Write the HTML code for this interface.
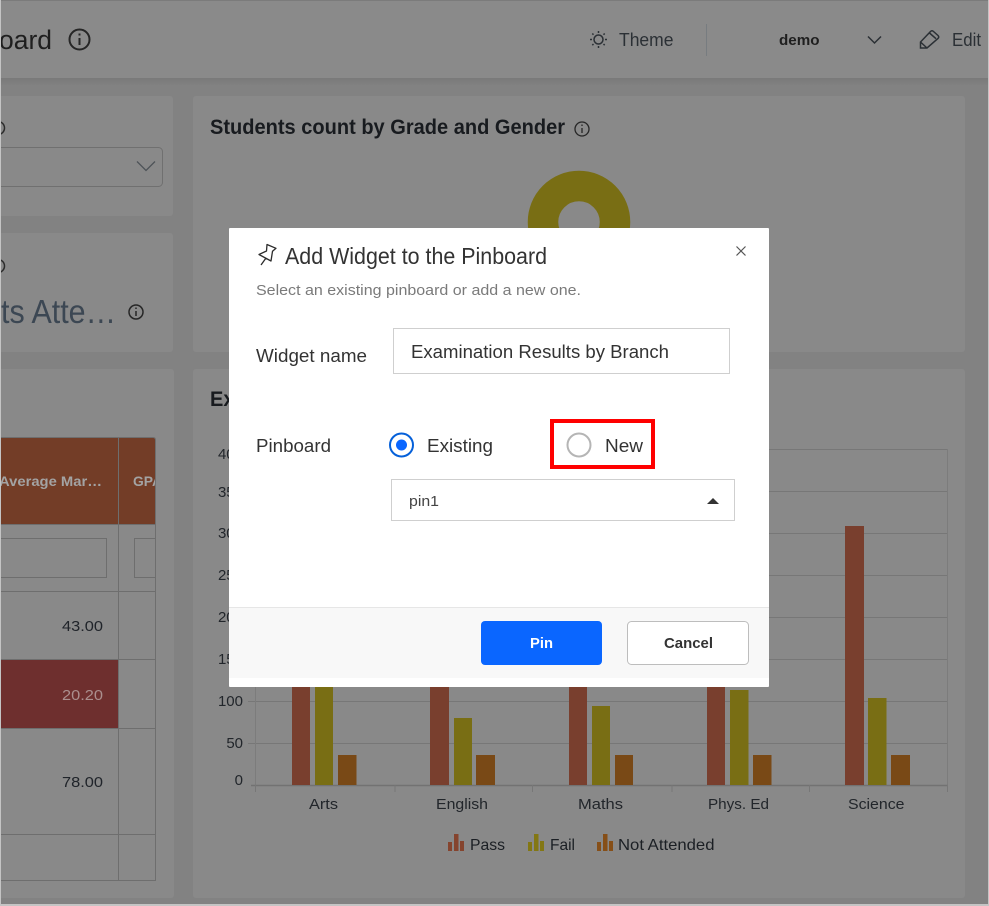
<!DOCTYPE html>
<html><head><meta charset="utf-8"><title>Add Widget to the Pinboard</title>
<style>
html,body{margin:0;padding:0;width:989px;height:906px;overflow:hidden;background:#828282}
svg{display:block}
text{font-family:"Liberation Sans",sans-serif;white-space:pre}
.b{font-weight:bold}
</style></head><body>
<svg width="989" height="906" viewBox="0 0 989 906" xmlns="http://www.w3.org/2000/svg">
<defs>
<clipPath id="gpa"><rect x="119" y="438" width="36" height="86"/></clipPath>
<linearGradient id="hs" x1="0" y1="0" x2="0" y2="1"><stop offset="0" stop-color="#797979"/><stop offset="1" stop-color="#828282"/></linearGradient>
</defs>
<rect width="989" height="906" fill="#828282"/>
<!-- header -->
<rect x="0" y="1" width="989" height="77" fill="#8a8a8a"/>
<rect x="0" y="78" width="989" height="8" fill="url(#hs)"/>
<rect x="0" y="0" width="989" height="1" fill="#7b7b7b"/>
<text x="-1" y="49" font-size="27" fill="#1f1f1f" textLength="53" lengthAdjust="spacingAndGlyphs">oard</text>
<g fill="none" stroke="#262626" stroke-width="2"><circle cx="79.5" cy="39.5" r="10"/><path d="M79.5 38v7M79.5 33.5v2"/></g>
<g fill="none" stroke="#2b3035" stroke-width="1.5"><circle cx="598.5" cy="39.5" r="4.5"/><path d="M598.500 31v2M598.500 46v2M590 39.500h2M605 39.500h2M592.300 33.500l1.200 1.200M603.500 44l1.200 1.200M604.700 33.500l-1.200 1.200M593.500 44l-1.200 1.200"/></g>
<text x="619" y="46" font-size="18" fill="#2b3035" textLength="54.500" lengthAdjust="spacingAndGlyphs">Theme</text>
<rect x="706" y="24" width="1" height="32" fill="#777c80"/>
<text class="b" x="779" y="45" font-size="14.500" fill="#1f1f1f" textLength="40.500" lengthAdjust="spacingAndGlyphs">demo</text>
<path d="M868 36.500l6.500 6.500 6.500-6.500" fill="none" stroke="#2b3035" stroke-width="1.500"/>
<path d="M920.500 48v-6l10-10.500q1.500-1.500 3 0l4.500 4q1.500 1.500 0 3l-11 9.500zM929.500 33l6.500 5.700M920.500 42l6.500 6" fill="none" stroke="#2b3035" stroke-width="1.500"/>
<text x="952" y="46" font-size="18" fill="#2b3035" textLength="29" lengthAdjust="spacingAndGlyphs">Edit</text>
<!-- left cards -->
<rect x="-10" y="96" width="183" height="120" rx="3" fill="#898989"/>
<circle cx="-2" cy="128" r="6.500" fill="none" stroke="#2b2b2b" stroke-width="1.500"/>
<rect x="-10" y="147.500" width="172.500" height="39" rx="4" fill="none" stroke="#707070"/>
<path d="M137 161.500l9 9 9-9" fill="none" stroke="#4e5358" stroke-width="1.300"/>
<rect x="-10" y="233" width="183" height="119" rx="3" fill="#898989"/>
<circle cx="-2" cy="266" r="6.500" fill="none" stroke="#2b2b2b" stroke-width="1.500"/>
<text x="1" y="323" font-size="33" fill="#3c4753" textLength="115" lengthAdjust="spacingAndGlyphs">ts Atte…</text>
<g fill="none" stroke="#262626" stroke-width="1.500"><circle cx="136" cy="312" r="7"/><path d="M136 311v5M136 307.500v1.500"/></g>
<rect x="-10" y="369" width="184" height="529" rx="3" fill="#898989"/>
<!-- table -->
<rect x="0" y="438" width="155" height="86" fill="#733d27"/>
<rect x="0" y="660" width="118" height="68" fill="#6e2f2e"/>
<g stroke="#6e6e6e" fill="none">
<path d="M0 437.500h153q2.500 0 2.500 2.500v440.500H0"/>
<path d="M118.500 438v443M0 524.500h155M0 591.500h155M0 659.500h155M0 728.500h155M0 834.500h155"/>
<path d="M0 538.500h106.500v39H0M155 538.500h-20.500v39H155"/>
</g>
<text class="b" x="-1" y="486" font-size="14" fill="#a3a3a3" textLength="103" lengthAdjust="spacingAndGlyphs">Average Mar…</text>
<g clip-path="url(#gpa)"><text class="b" x="133" y="486" font-size="14" fill="#a3a3a3" textLength="29" lengthAdjust="spacingAndGlyphs">GPA</text></g>
<text x="62" y="631" font-size="15" fill="#20242a" textLength="41" lengthAdjust="spacingAndGlyphs">43.00</text>
<text x="62" y="700" font-size="15" fill="#ab8f8e" textLength="41" lengthAdjust="spacingAndGlyphs">20.20</text>
<text x="62" y="787" font-size="15" fill="#20242a" textLength="41" lengthAdjust="spacingAndGlyphs">78.00</text>
<!-- right cards -->
<rect x="193" y="96" width="772" height="256" rx="3" fill="#898989"/>
<text class="b" x="210" y="134" font-size="21" fill="#181b1f" textLength="355" lengthAdjust="spacingAndGlyphs">Students count by Grade and Gender</text>
<g fill="none" stroke="#262626" stroke-width="1.300"><circle cx="582" cy="129" r="7"/><path d="M582 128v5M582 124.500v1.500"/></g>
<circle cx="579" cy="222" r="36" fill="none" stroke="#796e14" stroke-width="30.500"/>
<rect x="193" y="369" width="772" height="529" rx="3" fill="#898989"/>
<text class="b" x="210" y="406" font-size="21" fill="#181b1f" textLength="300" lengthAdjust="spacingAndGlyphs">Examination Results by Branch</text>
<!-- chart grid -->
<g stroke="#777777" fill="none">
<path d="M248 449.500h700M248 491.500h700M248 533.500h700M248 575.500h700M248 617.500h700M248 659.500h700M248 701.500h700M248 743.500h700"/>
<path d="M255.500 449v336M947.500 449v336" stroke="#7c7c7c"/>
<path d="M251 785.500h697" stroke="#727272" stroke-width="1.500"/>
<path d="M255.500 785v7M395 785v7M532.500 785v7M672 785v7M809.500 785v7M947.500 785v7"/>
</g>
<g font-size="15" fill="#22262b" text-anchor="end">
<text x="243" y="459">400</text><text x="243" y="497">350</text><text x="243" y="538">300</text><text x="243" y="580">250</text><text x="243" y="622">200</text><text x="243" y="664">150</text><text x="243" y="706">100</text><text x="243" y="748">50</text><text x="243" y="785">0</text>
</g>
<!-- bars -->
<g fill="#793f2e">
<rect x="292" y="640" width="18" height="145"/><rect x="430" y="640" width="19" height="145"/><rect x="569" y="640" width="18" height="145"/><rect x="707" y="640" width="18" height="145"/><rect x="845" y="526" width="19" height="259"/>
</g>
<g fill="#796e14">
<rect x="315" y="640" width="18" height="145"/><rect x="454" y="718" width="18" height="67"/><rect x="592" y="706" width="18" height="79"/><rect x="730" y="690" width="18.500" height="95"/><rect x="868" y="698" width="18.500" height="87"/>
</g>
<g fill="#794916">
<rect x="338" y="755" width="18.500" height="30"/><rect x="476" y="755" width="19" height="30"/><rect x="615" y="755" width="18" height="30"/><rect x="753" y="755" width="18.500" height="30"/><rect x="891" y="755" width="19" height="30"/>
</g>
<g font-size="14.500" fill="#22262b">
<text x="309" y="809" textLength="29" lengthAdjust="spacingAndGlyphs">Arts</text>
<text x="436" y="809" textLength="52" lengthAdjust="spacingAndGlyphs">English</text>
<text x="578" y="809" textLength="45" lengthAdjust="spacingAndGlyphs">Maths</text>
<text x="708" y="809" textLength="61" lengthAdjust="spacingAndGlyphs">Phys. Ed</text>
<text x="848" y="809" textLength="56.500" lengthAdjust="spacingAndGlyphs">Science</text>
</g>
<!-- legend -->
<g fill="#85442e"><rect x="448" y="842" width="4" height="9"/><rect x="454" y="834" width="4.500" height="17"/><rect x="460" y="841" width="4" height="10"/></g>
<g fill="#837714"><rect x="528" y="842" width="4" height="9"/><rect x="534" y="834" width="4.500" height="17"/><rect x="540" y="841" width="4" height="10"/></g>
<g fill="#864f18"><rect x="597" y="842" width="4" height="9"/><rect x="603" y="834" width="4.500" height="17"/><rect x="609" y="841" width="4" height="10"/></g>
<g font-size="16" fill="#1b1f24">
<text x="470" y="850" textLength="35" lengthAdjust="spacingAndGlyphs">Pass</text>
<text x="550" y="850" textLength="25" lengthAdjust="spacingAndGlyphs">Fail</text>
<text x="618" y="850" textLength="96.500" lengthAdjust="spacingAndGlyphs">Not Attended</text>
</g>
<!-- window edges -->
<rect x="0" y="0" width="1" height="906" fill="#c4c4c4"/>
<rect x="988" y="0" width="1" height="906" fill="#c4c4c4"/>
<rect x="0" y="904" width="989" height="2" fill="#c4c4c4"/>
<!-- dialog -->
<rect x="229" y="228" width="540" height="459" rx="1" fill="#fff"/>
<rect x="229" y="607" width="540" height="71" fill="#f8f8f8"/>
<rect x="229" y="607" width="540" height="1" fill="#e6e6e6"/>
<path d="M261 265l5-7M267 244.500l9 3.800-3.500 3-1.500 9.700-12-6.500 7.500-3.500z" fill="none" stroke="#2b2b2b" stroke-width="1.300" stroke-linejoin="round"/>
<text x="285" y="264" font-size="23" fill="#333" textLength="262" lengthAdjust="spacingAndGlyphs">Add Widget to the Pinboard</text>
<text x="256" y="295" font-size="15" fill="#7a7a7a" textLength="325" lengthAdjust="spacingAndGlyphs">Select an existing pinboard or add a new one.</text>
<path d="M736.500 246.500l9 9M745.500 246.500l-9 9" fill="none" stroke="#555" stroke-width="1.200"/>
<text x="256" y="362" font-size="18" fill="#333" textLength="111" lengthAdjust="spacingAndGlyphs">Widget name</text>
<rect x="393.500" y="328.500" width="336" height="45" fill="#fff" stroke="#cfcfcf"/>
<text x="411" y="358" font-size="18" fill="#333" textLength="258" lengthAdjust="spacingAndGlyphs">Examination Results by Branch</text>
<text x="256" y="452" font-size="18" fill="#333" textLength="75" lengthAdjust="spacingAndGlyphs">Pinboard</text>
<circle cx="401.500" cy="445" r="11.500" fill="#fff" stroke="#0560d9" stroke-width="2"/>
<circle cx="401.500" cy="445" r="5.500" fill="#0a66ff"/>
<text x="427" y="452" font-size="18" fill="#333" textLength="66" lengthAdjust="spacingAndGlyphs">Existing</text>
<rect x="552" y="421" width="101" height="46" fill="none" stroke="#f00" stroke-width="4"/>
<circle cx="579" cy="445" r="11.500" fill="#fff" stroke="#b5b5b5" stroke-width="2"/>
<text x="605" y="452" font-size="18" fill="#333" textLength="38" lengthAdjust="spacingAndGlyphs">New</text>
<rect x="391.500" y="479.500" width="343" height="41" fill="#fff" stroke="#cfcfcf"/>
<text x="409" y="506" font-size="15" fill="#444" textLength="30" lengthAdjust="spacingAndGlyphs">pin1</text>
<path d="M713 498l6 6h-12z" fill="#333"/>
<rect x="481" y="621" width="121" height="44" rx="4" fill="#0a66ff"/>
<text class="b" x="530" y="648" font-size="15" fill="#fff" textLength="23" lengthAdjust="spacingAndGlyphs">Pin</text>
<rect x="627.500" y="621.500" width="121" height="43" rx="4" fill="#fff" stroke="#bdbdbd"/>
<text class="b" x="664" y="648" font-size="15" fill="#333" textLength="49" lengthAdjust="spacingAndGlyphs">Cancel</text>
</svg>
</body></html>
